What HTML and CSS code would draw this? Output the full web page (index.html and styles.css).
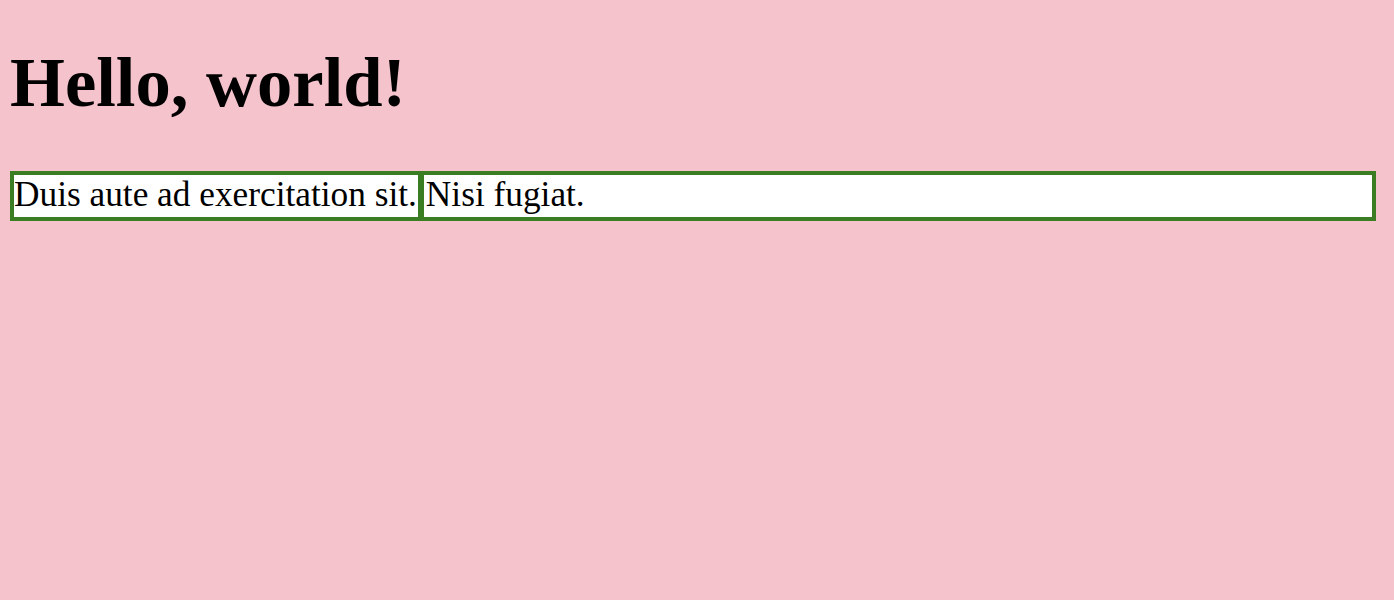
FILE: index.html
```html
<!DOCTYPE html>
<html lang="en">
<head>
<meta charset="utf-8">
<title>Hello, world!</title>
<link rel="stylesheet" href="styles.css">
</head>
<body>
<h1 class="title">Hello, world!</h1>
<div class="row">
  <div class="cell cell-first">Duis aute ad exercitation sit.</div>
  <div class="cell cell-grow">Nisi fugiat.</div>
</div>
</body>
</html>
```
FILE: styles.css
```css
html {
  background: #f5c3cb;
}
body {
  margin: 0;
  padding: 10px 18px 10px 10px;
  font-family: "Liberation Serif", "Times New Roman", serif;
  font-size: 35.3px;
  color: #000;
}
.title {
  margin: 32px 0 48px;
  font-size: 2em;
  font-weight: bold;
  line-height: normal;
}
.row {
  display: flex;
  border: 4px solid #3a7d23;
  background: #fff;
}
.cell {
  padding: 0 0 2px;
  white-space: nowrap;
}
.cell-first {
  flex: none;
  padding-right: 1px;
  border-right: 6px solid #3a7d23;
}
.cell-grow {
  flex: 1;
  padding-left: 2px;
}
```
